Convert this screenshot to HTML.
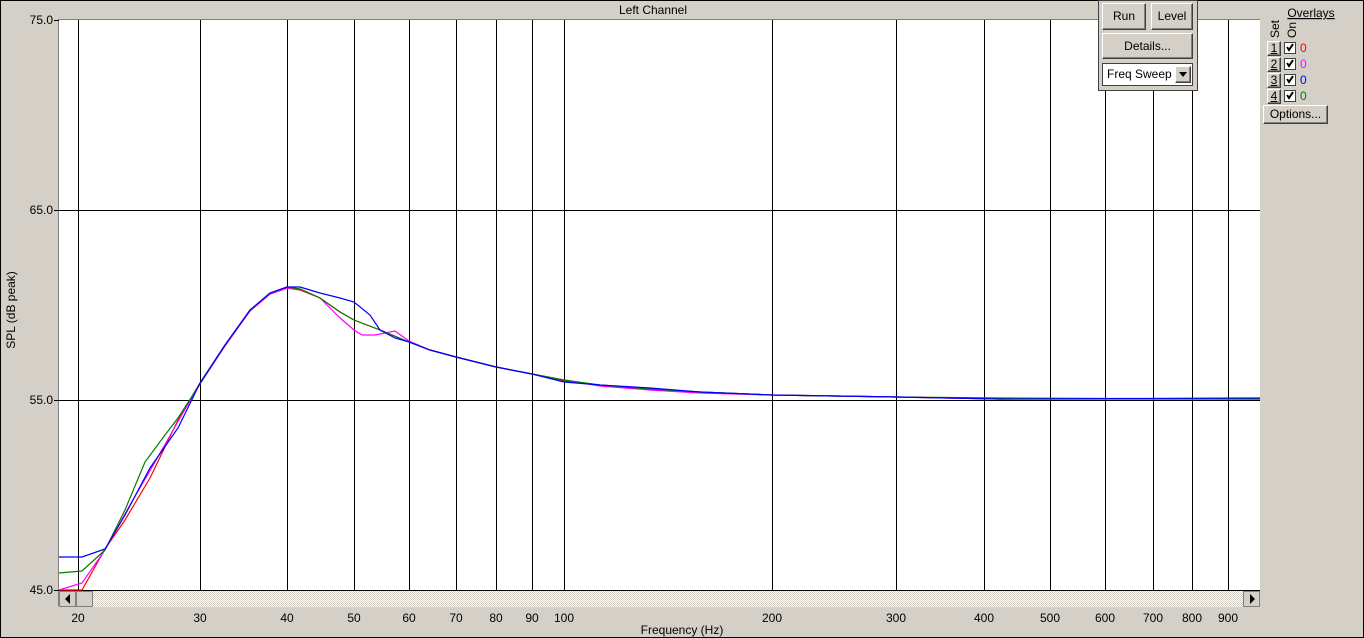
<!DOCTYPE html>
<html><head><meta charset="utf-8"><style>
html,body{margin:0;padding:0;}
body{width:1364px;height:638px;background:#d4d0c8;position:relative;overflow:hidden;font-family:"Liberation Sans",Arial,sans-serif;font-size:12px;color:#000;}
.btn{position:absolute;background:#d4d0c8;border:1px solid;border-color:#fff #404040 #404040 #fff;box-shadow:inset -1px -1px 0 #808080;text-align:center;font-size:12px;box-sizing:border-box;}
</style></head><body>
<svg width="1364" height="638" style="position:absolute;left:0;top:0" font-family="Liberation Sans, Arial, sans-serif" font-size="12">
<rect x="0.5" y="0.5" width="1363" height="637" fill="none" stroke="#000"/>
<text x="653" y="14" text-anchor="middle">Left Channel</text>
<rect x="59" y="20" width="1201" height="570" fill="#fff"/>
<line x1="58.5" y1="19" x2="58.5" y2="606" stroke="#808080" stroke-width="1"/>
<line x1="58" y1="19.5" x2="1260" y2="19.5" stroke="#808080"/>
<g stroke="#000" stroke-width="1">
<line x1="78.5" y1="20" x2="78.5" y2="590"/><line x1="200.5" y1="20" x2="200.5" y2="590"/><line x1="287.5" y1="20" x2="287.5" y2="590"/><line x1="354.5" y1="20" x2="354.5" y2="590"/><line x1="409.5" y1="20" x2="409.5" y2="590"/><line x1="456.5" y1="20" x2="456.5" y2="590"/><line x1="496.5" y1="20" x2="496.5" y2="590"/><line x1="532.5" y1="20" x2="532.5" y2="590"/><line x1="564.5" y1="20" x2="564.5" y2="590"/><line x1="772.5" y1="20" x2="772.5" y2="590"/><line x1="896.5" y1="20" x2="896.5" y2="590"/><line x1="984.5" y1="20" x2="984.5" y2="590"/><line x1="1050.5" y1="20" x2="1050.5" y2="590"/><line x1="1105.5" y1="20" x2="1105.5" y2="590"/><line x1="1153.5" y1="20" x2="1153.5" y2="590"/><line x1="1192.5" y1="20" x2="1192.5" y2="590"/><line x1="1228.5" y1="20" x2="1228.5" y2="590"/>
<line x1="59" y1="210.5" x2="1260" y2="210.5"/><line x1="59" y1="400.5" x2="1260" y2="400.5"/><line x1="59" y1="590.5" x2="1260" y2="590.5"/>
<line x1="54" y1="20.5" x2="59" y2="20.5"/><line x1="54" y1="210.5" x2="59" y2="210.5"/><line x1="54" y1="400.5" x2="59" y2="400.5"/><line x1="54" y1="590.5" x2="59" y2="590.5"/>
</g>
<g fill="none" stroke-width="1.2">
<polyline stroke="#ff0000" points="59,590 82,590 105,549 125,520 150,478 178,420 200,383 225,345 250,311 270,294 287,288 300,290 320,298 340,312 354,320 380,330 409,342 430,350 456,357 496,367 532,374 564,381 600,385 650,389 700,392 772,395 896,397 1000,399 1260,399"/>
<polyline stroke="#ff00ff" points="59,590 82,583 105,550 130,505 155,462 180,418 200,384 225,346 250,311 270,294 287,288 300,289 320,298 340,318 354,330 362,335 375,335 395,331 409,341 430,350 456,357 496,367 532,374 564,380 600,386 650,390 700,393 772,395 896,397 1000,399 1260,399"/>
<polyline stroke="#008000" points="59,573 82,571 105,550 125,510 145,462 165,435 178,418 200,384 225,345 250,310 270,293 287,287 300,289 320,298 340,312 354,320 380,330 409,342 430,350 456,357 496,367 532,374 564,380 600,385 650,389 700,392 772,395 896,397 1000,398 1260,399"/>
<polyline stroke="#0000ff" points="59,557 82,557 105,549 125,515 150,468 178,428 200,383 225,345 250,310 270,293 287,287 300,287 320,293 340,298 354,302 370,315 380,330 395,338 409,342 430,350 456,357 496,367 532,374 564,382 600,385 650,388 700,392 772,395 896,397 1000,399 1260,398"/>
</g>
<g text-anchor="end"><text x="53" y="24">75.0</text><text x="53" y="214">65.0</text><text x="53" y="404">55.0</text><text x="53" y="594">45.0</text></g>
<text transform="translate(15,310) rotate(-90)" text-anchor="middle">SPL (dB peak)</text>
<defs><pattern id="dith" width="2" height="2" patternUnits="userSpaceOnUse"><rect width="2" height="2" fill="#fff"/><rect width="1" height="1" fill="#d4d0c8"/><rect x="1" y="1" width="1" height="1" fill="#d4d0c8"/></pattern></defs>
<rect x="59" y="591" width="1201" height="16" fill="url(#dith)"/>
<rect x="59.5" y="591.5" width="16" height="15" fill="#d4d0c8" stroke="#808080"/><path d="M70 594 L70 604 L65 599Z" fill="#000"/>
<rect x="76.5" y="591.5" width="16" height="15" fill="#d4d0c8" stroke="#808080"/>
<rect x="1243.5" y="591.5" width="16" height="15" fill="#d4d0c8" stroke="#808080"/><path d="M1250 594 L1250 604 L1255 599Z" fill="#000"/>
<g text-anchor="middle"><text x="78" y="622">20</text><text x="200" y="622">30</text><text x="287" y="622">40</text><text x="354" y="622">50</text><text x="409" y="622">60</text><text x="456" y="622">70</text><text x="496" y="622">80</text><text x="532" y="622">90</text><text x="564" y="622">100</text><text x="772" y="622">200</text><text x="896" y="622">300</text><text x="984" y="622">400</text><text x="1050" y="622">500</text><text x="1105" y="622">600</text><text x="1153" y="622">700</text><text x="1192" y="622">800</text><text x="1228" y="622">900</text>
<text x="682" y="634">Frequency (Hz)</text></g>
<rect x="1098.5" y="0.5" width="99" height="90" fill="#d4d0c8" stroke="#404040"/>
<text x="1311" y="17" text-anchor="middle" text-decoration="underline">Overlays</text>
<text transform="translate(1279,38) rotate(-90)">Set</text>
<text transform="translate(1296,38) rotate(-90)">On</text>
<g font-size="12"><text x="1300" y="52" fill="#ff0000">0</text><text x="1300" y="68" fill="#ff00ff">0</text><text x="1300" y="84" fill="#0000ff">0</text><text x="1300" y="100" fill="#008000">0</text></g>
</svg>
<div class="btn" style="left:1102px;top:3px;width:44px;height:27px;line-height:25px">Run</div>
<div class="btn" style="left:1151px;top:3px;width:42px;height:27px;line-height:25px">Level</div>
<div class="btn" style="left:1102px;top:33px;width:91px;height:26px;line-height:24px">Details...</div>
<div style="position:absolute;left:1102px;top:63px;width:91px;height:23px;background:#fff;border:1px solid #404040;box-sizing:border-box;line-height:21px;padding-left:4px">Freq Sweep</div>
<div class="btn" style="left:1175px;top:66px;width:16px;height:17px;"><svg width="14" height="15"><path d="M3 5 L11 5 L7 10Z" fill="#000"/></svg></div>
<div class="btn" style="left:1267px;top:41px;width:14px;height:15px;line-height:13px;text-decoration:underline">1</div>
<div class="btn" style="left:1267px;top:57px;width:14px;height:15px;line-height:13px;text-decoration:underline">2</div>
<div class="btn" style="left:1267px;top:73px;width:14px;height:15px;line-height:13px;text-decoration:underline">3</div>
<div class="btn" style="left:1267px;top:89px;width:14px;height:15px;line-height:13px;text-decoration:underline">4</div>
<svg width="20" height="70" style="position:absolute;left:1283px;top:41px">
<g fill="#fff" stroke="#404040"><rect x="1.5" y="1.5" width="11" height="11"/><rect x="1.5" y="17.5" width="11" height="11"/><rect x="1.5" y="33.5" width="11" height="11"/><rect x="1.5" y="49.5" width="11" height="11"/></g>
<g fill="none" stroke="#000" stroke-width="2"><path d="M4 6 L6 9 L10 3"/><path d="M4 22 L6 25 L10 19"/><path d="M4 38 L6 41 L10 35"/><path d="M4 54 L6 57 L10 51"/></g>
</svg>
<div class="btn" style="left:1263px;top:105px;width:65px;height:19px;line-height:17px">Options...</div>
</body></html>
